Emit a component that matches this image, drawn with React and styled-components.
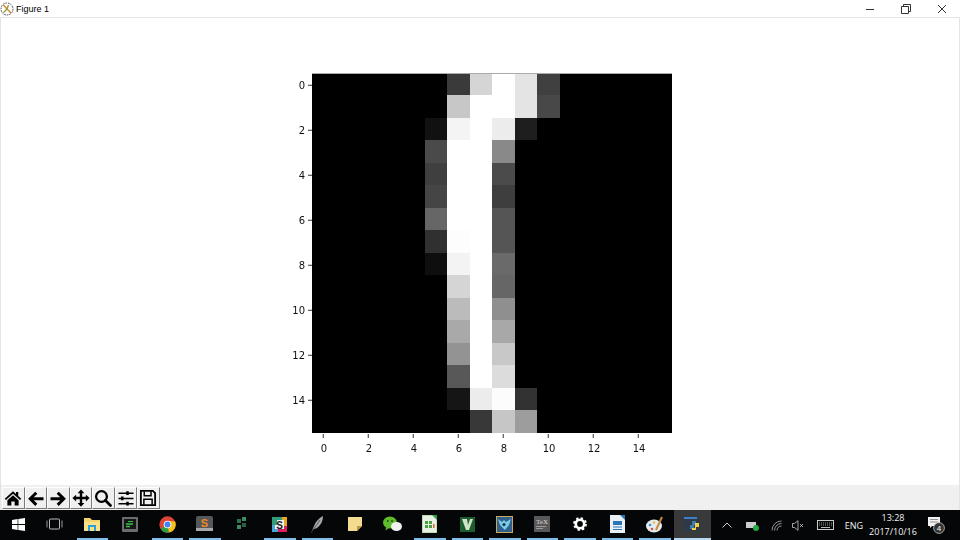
import React from "react";
import styled, { createGlobalStyle } from "styled-components";

const Global = createGlobalStyle`
  html, body { margin: 0; padding: 0; background: #fff; overflow: hidden; }
`;

const Window = styled.div`
  width: 960px;
  height: 540px;
  display: flex;
  flex-direction: column;
  overflow: hidden;
  font-family: "Open Sans", "Liberation Sans", sans-serif;
`;

const TitleBar = styled.div`
  height: 17px;
  flex: none;
  display: flex;
  align-items: center;
  background: #fff;
  border-bottom: 1px solid #e3e3e3;
`;

const AppIcon = styled.svg`
  width: 14px;
  height: 14px;
  flex: none;
`;

const TitleText = styled.span`
  margin-left: 2px;
  font-family: "Liberation Sans", sans-serif;
  font-size: 9px;
  color: #000;
`;

const WindowButtons = styled.div`
  margin-left: auto;
  display: flex;
`;

const WindowButton = styled.div`
  width: 36px;
  height: 17px;
  display: flex;
  align-items: center;
  justify-content: center;
`;

const Canvas = styled.div`
  flex: 1;
  display: flex;
  background: #fff;
  border-left: 1px solid #e3e3e3;
  border-right: 1px solid #e3e3e3;
  padding: 52px 0 0 288px;
`;

const Plot = styled.svg`
  width: 390px;
  height: 390px;
  flex: none;
  display: block;
  will-change: transform;
`;

const Toolbar = styled.div`
  height: 25px;
  flex: none;
  display: flex;
  align-items: flex-start;
  padding: 2px 0 0 1px;
  box-sizing: border-box;
  background: #f0f0f0;
  border-left: 1px solid #e3e3e3;
  border-right: 1px solid #e3e3e3;
`;

const ToolButton = styled.div`
  width: 22.5px;
  height: 22px;
  box-sizing: border-box;
  display: flex;
  align-items: center;
  justify-content: center;
  border-top: 1px solid #fff;
  border-left: 1px solid #fff;
  border-right: 1px solid #7a7a7a;
  border-bottom: 1px solid #7a7a7a;
`;

const Taskbar = styled.div`
  height: 30px;
  flex: none;
  display: flex;
  background: #050607;
  color: #fff;
  font-family: "Open Sans", "Liberation Sans", sans-serif;
`;

const StartButton = styled.div`
  width: 36px;
  flex: none;
  display: flex;
  align-items: center;
  justify-content: center;
  padding-bottom: 2px;
  box-sizing: border-box;
`;

const TaskItem = styled.div`
  width: 37.5px;
  flex: none;
  box-sizing: border-box;
  display: flex;
  align-items: center;
  justify-content: center;
  padding-bottom: 2px;
  position: relative;
  background: ${(p) => (p.$active ? "#37393a" : "transparent")};

  &::after {
    content: "";
    display: ${(p) => (p.$running || p.$active ? "block" : "none")};
    position: absolute;
    bottom: 0;
    left: ${(p) => (p.$active ? "0" : "3px")};
    right: ${(p) => (p.$active ? "0" : "3px")};
    height: 2px;
    background: ${(p) => (p.$active ? "#b9d7ee" : "#7fbdeb")};
  }
`;

const Tray = styled.div`
  margin-left: auto;
  display: flex;
  align-items: center;
  height: 100%;
  padding-right: 5px;
`;

const TrayItem = styled.div`
  width: ${(p) => p.$w}px;
  flex: none;
  display: flex;
  align-items: center;
  justify-content: center;
`;

const Lang = styled.span`
  font-size: 9px;
  color: #f2f2f2;
`;

const Clock = styled.div`
  width: 52px;
  flex: none;
  text-align: center;
  font-size: 9px;
  line-height: 14px;
  color: #f2f2f2;
`;

const Rows = {
  0: { 6: 0x3a, 7: 0xd5, 8: 0xff, 9: 0xe4, 10: 0x40 },
  1: { 6: 0xc7, 7: 0xff, 8: 0xff, 9: 0xe4, 10: 0x48 },
  2: { 5: 0x11, 6: 0xf4, 7: 0xff, 8: 0xec, 9: 0x1e },
  3: { 5: 0x4a, 6: 0xff, 7: 0xff, 8: 0x89 },
  4: { 5: 0x3f, 6: 0xff, 7: 0xff, 8: 0x4b },
  5: { 5: 0x45, 6: 0xff, 7: 0xff, 8: 0x3e },
  6: { 5: 0x66, 6: 0xff, 7: 0xff, 8: 0x55 },
  7: { 5: 0x30, 6: 0xfd, 7: 0xff, 8: 0x55 },
  8: { 5: 0x0e, 6: 0xf3, 7: 0xff, 8: 0x6a },
  9: { 6: 0xd5, 7: 0xff, 8: 0x66 },
  10: { 6: 0xbb, 7: 0xff, 8: 0x8f },
  11: { 6: 0xa9, 7: 0xff, 8: 0xa8 },
  12: { 6: 0x93, 7: 0xff, 8: 0xc8 },
  13: { 6: 0x58, 7: 0xff, 8: 0xdc },
  14: { 6: 0x15, 7: 0xec, 8: 0xfc, 9: 0x32 },
  15: { 7: 0x38, 8: 0xc6, 9: 0x9d },
};

const CELL = 22.5;
const OX = 23;
const OY = 4;
const TICKS = [0, 2, 4, 6, 8, 10, 12, 14];

// cell edges on whole pixels, otherwise seams show between the rects
const colEdge = (i) => Math.round(i * CELL);
const rowEdge = (i) => Math.max(0, Math.floor(i * CELL - 1));

function Heatmap() {
  const cells = [];
  Object.keys(Rows).forEach((r) => {
    Object.keys(Rows[r]).forEach((c) => {
      const v = Rows[r][c];
      const col = Number(c);
      const row = Number(r);
      cells.push(
        <rect
          key={r + "-" + c}
          x={OX + colEdge(col)}
          y={OY + rowEdge(row)}
          width={colEdge(col + 1) - colEdge(col)}
          height={rowEdge(row + 1) - rowEdge(row)}
          fill={`rgb(${v},${v},${v})`}
        />
      );
    });
  });
  return (
    <Plot viewBox="0 0 390 390">
      <rect x={OX} y={OY - 1} width={360} height={1} fill="#aaa" />
      <rect x={OX} y={OY} width={360} height={359} fill="#000" />
      {cells}
      {TICKS.map((t) => {
        const p = (t + 0.5) * CELL;
        return (
          <g key={t} fontFamily="DejaVu Sans" fontSize="10" fill="#111">
            <line x1={OX - 4} x2={OX} y1={OY + p} y2={OY + p} stroke="#000" strokeWidth="0.8" />
            <line x1={OX + p} x2={OX + p} y1={OY + 360} y2={OY + 364} stroke="#000" strokeWidth="0.8" />
            <text x={OX - 7} y={OY + p + 3.5} textAnchor="end">{t}</text>
            <text x={OX + p + 0.75} y={OY + 378} textAnchor="middle">{t}</text>
          </g>
        );
      })}
    </Plot>
  );
}

const Tool = ({ children }) => (
  <ToolButton>
    <svg width="18" height="18" viewBox="0 0 24 24">{children}</svg>
  </ToolButton>
);

const Ic = ({ children, w = 20, h = 20, vb = "0 0 20 20" }) => (
  <svg width={w} height={h} viewBox={vb}>{children}</svg>
);

export default function App() {
  return (
    <Window>
      <Global />
      <TitleBar>
        <AppIcon viewBox="0 0 14 14">
          <circle cx="7" cy="7" r="6" fill="#fff" stroke="#333" strokeWidth="0.9" strokeDasharray="1.6 1" />
          <path d="M7 7 L3.5 3 M7 7 L11 11" stroke="#e08a2c" strokeWidth="1.5" />
          <path d="M7 7 L8.5 3 M7 7 L3.5 10.5" stroke="#8a9a3a" strokeWidth="1.3" />
        </AppIcon>
        <TitleText>Figure 1</TitleText>
        <WindowButtons>
          <WindowButton>
            <svg width="10" height="10" viewBox="0 0 10 10"><path d="M1 5.5H9" stroke="#333" /></svg>
          </WindowButton>
          <WindowButton>
            <svg width="10" height="10" viewBox="0 0 10 10" fill="none" stroke="#333">
              <path d="M.5 2.5H7.5V9.5H.5Z" />
              <path d="M2.5 2.5V.5H9.5V7.5H7.5" />
            </svg>
          </WindowButton>
          <WindowButton>
            <svg width="10" height="10" viewBox="0 0 10 10"><path d="M1 1L9 9M9 1L1 9" stroke="#333" /></svg>
          </WindowButton>
        </WindowButtons>
      </TitleBar>

      <Canvas>
        <Heatmap />
      </Canvas>

      <Toolbar>
        <Tool>
          <path d="M12 3L1 13l1.6 1.8L12 6.4l9.4 8.4L23 13l-4-3.6V4h-3v2.7z" fill="#000" />
          <path d="M4.5 15L12 8.4 19.5 15v7h-5.3v-5.5H9.8V22H4.5z" fill="#000" />
        </Tool>
        <Tool>
          <path d="M11 3.5l2.8 2.8L9 11h13v4H9l4.8 4.7L11 22.5 1.5 13z" fill="#000" />
        </Tool>
        <Tool>
          <path d="M13 3.5l-2.8 2.8L15 11H2v4h13l-4.8 4.7 2.8 2.8 9.5-9.5z" fill="#000" />
        </Tool>
        <Tool>
          <path d="M12 .5L16.5 5.5H13.6V10.4H18.5V7.5L23.5 12 18.5 16.5V13.6H13.6V18.5H16.5L12 23.5 7.5 18.5H10.4V13.6H5.5V16.5L.5 12 5.5 7.5V10.4H10.4V5.5H7.5z" fill="#000" />
        </Tool>
        <Tool>
          <circle cx="10" cy="10" r="7.2" fill="none" stroke="#000" strokeWidth="3" />
          <path d="M15.3 15.3L22 22" stroke="#000" strokeWidth="3.6" strokeLinecap="round" />
        </Tool>
        <Tool>
          <path d="M2 5.5H22M2 12.5H22M2 19.5H22" stroke="#000" strokeWidth="2" />
          <path d="M14 3V8M7 10V15M14 17V22" stroke="#000" strokeWidth="3.4" />
        </Tool>
        <Tool>
          <path d="M2.5 2.5H18.5L21.5 5.5V21.5H2.5Z" fill="none" stroke="#000" strokeWidth="2.4" />
          <path d="M7 3V9H16V3" fill="none" stroke="#000" strokeWidth="2" />
          <path d="M6.5 21V13.5H17.5V21" fill="none" stroke="#000" strokeWidth="2" />
        </Tool>
      </Toolbar>

      <Taskbar>
        <StartButton>
          <Ic w={13} h={13} vb="0 0 13 13">
            <path d="M0 1.9L5.6 1.1V6.1H0zM6.3 1L13 0V6.1H6.3zM0 6.9H5.6V11.9L0 11.1zM6.3 6.9H13V13L6.3 12z" fill="#fff" />
          </Ic>
        </StartButton>
        <TaskItem>
          <Ic w={17} h={12} vb="0 0 17 12">
            <rect x="3.5" y="1" width="10" height="10" rx="1" fill="none" stroke="#bbb" />
            <path d="M1 2.5V9.5M16 2.5V9.5" stroke="#999" />
          </Ic>
        </TaskItem>
        <TaskItem $running>
          <Ic w={17} h={15} vb="0 0 17 15">
            <path d="M0 1H6L8 3H16V14H0z" fill="#f6d36b" />
            <rect x="0" y="5" width="16" height="9" fill="#fbe08a" />
            <path d="M4 14V8H12V14H10V10H6V14z" fill="#2a9fd8" />
          </Ic>
        </TaskItem>
        <TaskItem>
          <Ic w={16} h={15} vb="0 0 16 15">
            <rect x="0" y="0" width="16" height="15" rx="1" fill="#6d6d6d" />
            <rect x="2" y="2" width="12" height="10" fill="#161616" />
            <path d="M4 7H11M4 9.5H8" stroke="#35c24a" strokeWidth="1.4" />
            <path d="M6 4.5H11" stroke="#35c24a" />
          </Ic>
        </TaskItem>
        <TaskItem $running>
          <Ic w={17} h={17} vb="0 0 24 24">
            <circle cx="12" cy="12" r="11.5" fill="#db4437" />
            <path d="M12 12L2.2 18A11.5 11.5 0 0 0 14 23.3z" fill="#2f9e47" />
            <path d="M12 12L14 23.3A11.5 11.5 0 0 0 22.7 7.5L12 7.5z" fill="#f3c31c" />
            <circle cx="12" cy="12" r="5.4" fill="#fff" />
            <circle cx="12" cy="12" r="4.2" fill="#4285f4" />
          </Ic>
        </TaskItem>
        <TaskItem $running>
          <Ic w={17} h={16} vb="0 0 17 16">
            <rect x="0" y="0" width="17" height="14" rx="2" fill="#55585a" />
            <rect x="0" y="12" width="17" height="3" fill="#a8a8a8" />
            <text x="8.5" y="10.5" textAnchor="middle" fontFamily="Liberation Sans" fontWeight="700" fontSize="11" fill="#f08a24">S</text>
          </Ic>
        </TaskItem>
        <TaskItem>
          <Ic w={10} h={14} vb="0 0 10 14">
            <rect x="0" y="2" width="4" height="4" fill="#2f6f52" />
            <rect x="5" y="0" width="4" height="4" fill="#3c8a66" />
            <rect x="0" y="8" width="4" height="4" fill="#3c8a66" />
            <rect x="5" y="6" width="4" height="4" fill="#2a5f48" />
          </Ic>
        </TaskItem>
        <TaskItem $running>
          <Ic w={15} h={15} vb="0 0 15 15">
            <rect x="0" y="0" width="15" height="15" fill="#f4f4f4" />
            <path d="M0 0H15V3H5V8H0z" fill="#2f9e7a" />
            <path d="M10 0H15V9H12V3H10z" fill="#e9a820" />
            <path d="M15 9V15H6V12H12V9z" fill="#d9215e" />
            <path d="M0 8H3V12H6V15H0z" fill="#4aa3d9" />
            <text x="7.5" y="11.5" textAnchor="middle" fontFamily="Liberation Sans" fontWeight="700" fontSize="10" fill="#222">S</text>
          </Ic>
        </TaskItem>
        <TaskItem $running>
          <Ic w={14} h={19} vb="0 0 14 19">
            <path d="M1 18L4 11C6 6 9 3 13 1C13 6 11 10 7 13L3 14.5z" fill="#a8a8a8" />
            <path d="M1 18L10 5" stroke="#333" strokeWidth="0.7" />
          </Ic>
        </TaskItem>
        <TaskItem>
          <Ic w={14} h={14} vb="0 0 14 14">
            <path d="M0 0H14V9L9 14H0z" fill="#f3dc8f" />
            <path d="M9 14V9H14z" fill="#b59a4a" />
          </Ic>
        </TaskItem>
        <TaskItem>
          <Ic w={19} h={16} vb="0 0 19 16">
            <ellipse cx="7" cy="6.5" rx="7" ry="6" fill="#5dbb2c" />
            <path d="M3 11L2.5 14.5 6 12z" fill="#5dbb2c" />
            <ellipse cx="13.5" cy="10.5" rx="5.5" ry="4.5" fill="#f1f1f1" />
            <circle cx="4.8" cy="5" r="0.9" fill="#23460f" />
            <circle cx="9" cy="5" r="0.9" fill="#23460f" />
          </Ic>
        </TaskItem>
        <TaskItem $running>
          <Ic w={15} h={18} vb="0 0 15 18">
            <path d="M0 0H11L15 4V18H0z" fill="#e9f0e6" stroke="#6aa84f" strokeWidth="0.6" />
            <path d="M10 0L15 0V5z" fill="#2e9e3e" />
            <rect x="3" y="6" width="7" height="7" fill="#4aa33f" />
            <path d="M3 9.5H10M6.5 6V13" stroke="#e9f0e6" />
            <rect x="11" y="9" width="1.6" height="4" fill="#d9702a" />
          </Ic>
        </TaskItem>
        <TaskItem $running>
          <Ic w={15} h={15} vb="0 0 15 15">
            <rect x="0" y="0" width="15" height="15" fill="#1d5c2e" />
            <path d="M2 2H7L8 8 10 2H13L9 13H6z" fill="#cfe4c7" />
          </Ic>
        </TaskItem>
        <TaskItem $running>
          <Ic w={17} h={17} vb="0 0 17 17">
            <rect x="0.5" y="0.5" width="16" height="16" fill="#2f5f8a" stroke="#c9a860" />
            <path d="M2 3L6 6 8 4 10 6 15 3 13 9 9 14 4 9z" fill="#7ccbe6" />
            <circle cx="8" cy="8.5" r="1.6" fill="#12324c" />
          </Ic>
        </TaskItem>
        <TaskItem $running>
          <Ic w={16} h={16} vb="0 0 16 16">
            <rect x="0" y="0" width="16" height="16" fill="#585858" />
            <text x="8" y="8" textAnchor="middle" fontFamily="Liberation Serif" fontSize="7" fill="#ddd">TeX</text>
            <path d="M2 10.5H12M2 12.5H9" stroke="#aaa" strokeWidth="0.8" />
          </Ic>
        </TaskItem>
        <TaskItem $running>
          <Ic w={14} h={14} vb="0 0 14 14">
            <circle cx="7" cy="7" r="4.2" fill="none" stroke="#fff" strokeWidth="2.6" />
            <circle cx="7" cy="7" r="5.8" fill="none" stroke="#fff" strokeWidth="2.2" strokeDasharray="2.3 2.25" />
          </Ic>
        </TaskItem>
        <TaskItem $running>
          <Ic w={15} h={18} vb="0 0 15 18">
            <path d="M0 0H11L15 4V18H0z" fill="#eaf1f6" />
            <path d="M10 0L15 0V5z" fill="#2a76b4" />
            <rect x="3" y="6" width="9" height="4" fill="#2a76b4" />
            <path d="M3 12H12M3 14.5H12" stroke="#2a76b4" />
          </Ic>
        </TaskItem>
        <TaskItem $running>
          <Ic w={18} h={17} vb="0 0 18 17">
            <ellipse cx="8" cy="10" rx="8" ry="6.5" fill="#e6ebef" />
            <circle cx="4" cy="9" r="1.3" fill="#3d8ed1" />
            <circle cx="6" cy="13" r="1.3" fill="#d9503c" />
            <circle cx="8" cy="6.5" r="1.2" fill="#e6b93c" />
            <path d="M10 14L16 1" stroke="#c98a3c" strokeWidth="2" />
          </Ic>
        </TaskItem>
        <TaskItem $active>
          <Ic w={16} h={15} vb="0 0 16 15">
            <rect x="0" y="0" width="13" height="14" fill="#2d3a4a" />
            <path d="M0 0H13V2H0z" fill="#3d7fc4" />
            <path d="M8 4H12V8H8zM6 8H10V12H6z" fill="#3f7cb5" />
            <path d="M11 6H15V10H12V13H8V11H11z" fill="#f0cf4a" />
          </Ic>
        </TaskItem>
        <Tray>
          <TrayItem $w={24}>
            <Ic w={10} h={6} vb="0 0 10 6"><path d="M.5 5.5L5 1l4.5 4.5" fill="none" stroke="#ccc" /></Ic>
          </TrayItem>
          <TrayItem $w={26}>
            <Ic w={13} h={11} vb="0 0 13 11">
              <rect x="0" y="2" width="10" height="6" fill="#ccc" />
              <circle cx="10" cy="8" r="3" fill="#27a844" />
            </Ic>
          </TrayItem>
          <TrayItem $w={22}>
            <Ic w={11} h={11} vb="0 0 11 11">
              <path d="M1 10.5A9.5 9.5 0 0 1 10.5 1M3.5 10.5A7 7 0 0 1 10.5 3.5M6 10.5A4.5 4.5 0 0 1 10.5 6" fill="none" stroke="#bbb" strokeWidth="0.8" />
            </Ic>
          </TrayItem>
          <TrayItem $w={22}>
            <Ic w={12} h={11} vb="0 0 12 11">
              <path d="M.5 3.5H2.5L6 .7V10.3L2.5 7.5H.5z" fill="none" stroke="#ccc" strokeWidth="0.8" />
              <path d="M8 4L11 7M11 4L8 7" stroke="#ccc" strokeWidth="0.8" />
            </Ic>
          </TrayItem>
          <TrayItem $w={32}>
            <Ic w={17} h={10} vb="0 0 17 10">
              <rect x=".5" y=".5" width="16" height="9" fill="none" stroke="#ccc" />
              <path d="M2 3H15M2 5H15" stroke="#999" strokeDasharray="1 1" />
              <path d="M4 7.5H13" stroke="#bbb" />
            </Ic>
          </TrayItem>
          <TrayItem $w={26}><Lang>ENG</Lang></TrayItem>
          <Clock>13:28<br />2017/10/16</Clock>
          <TrayItem $w={36}>
            <Ic w={18} h={18} vb="0 0 18 18">
              <path d="M0 1H12V10H4L2 12V10H0z" fill="#f2f2f2" />
              <path d="M2 3.5H10M2 6H10" stroke="#666" strokeWidth="0.7" />
              <circle cx="11" cy="12" r="5.4" fill="#333" stroke="#ddd" strokeWidth="0.7" />
              <text x="11" y="15" textAnchor="middle" fontFamily="Liberation Sans" fontSize="8" fill="#fff">4</text>
            </Ic>
          </TrayItem>
        </Tray>
      </Taskbar>
    </Window>
  );
}
